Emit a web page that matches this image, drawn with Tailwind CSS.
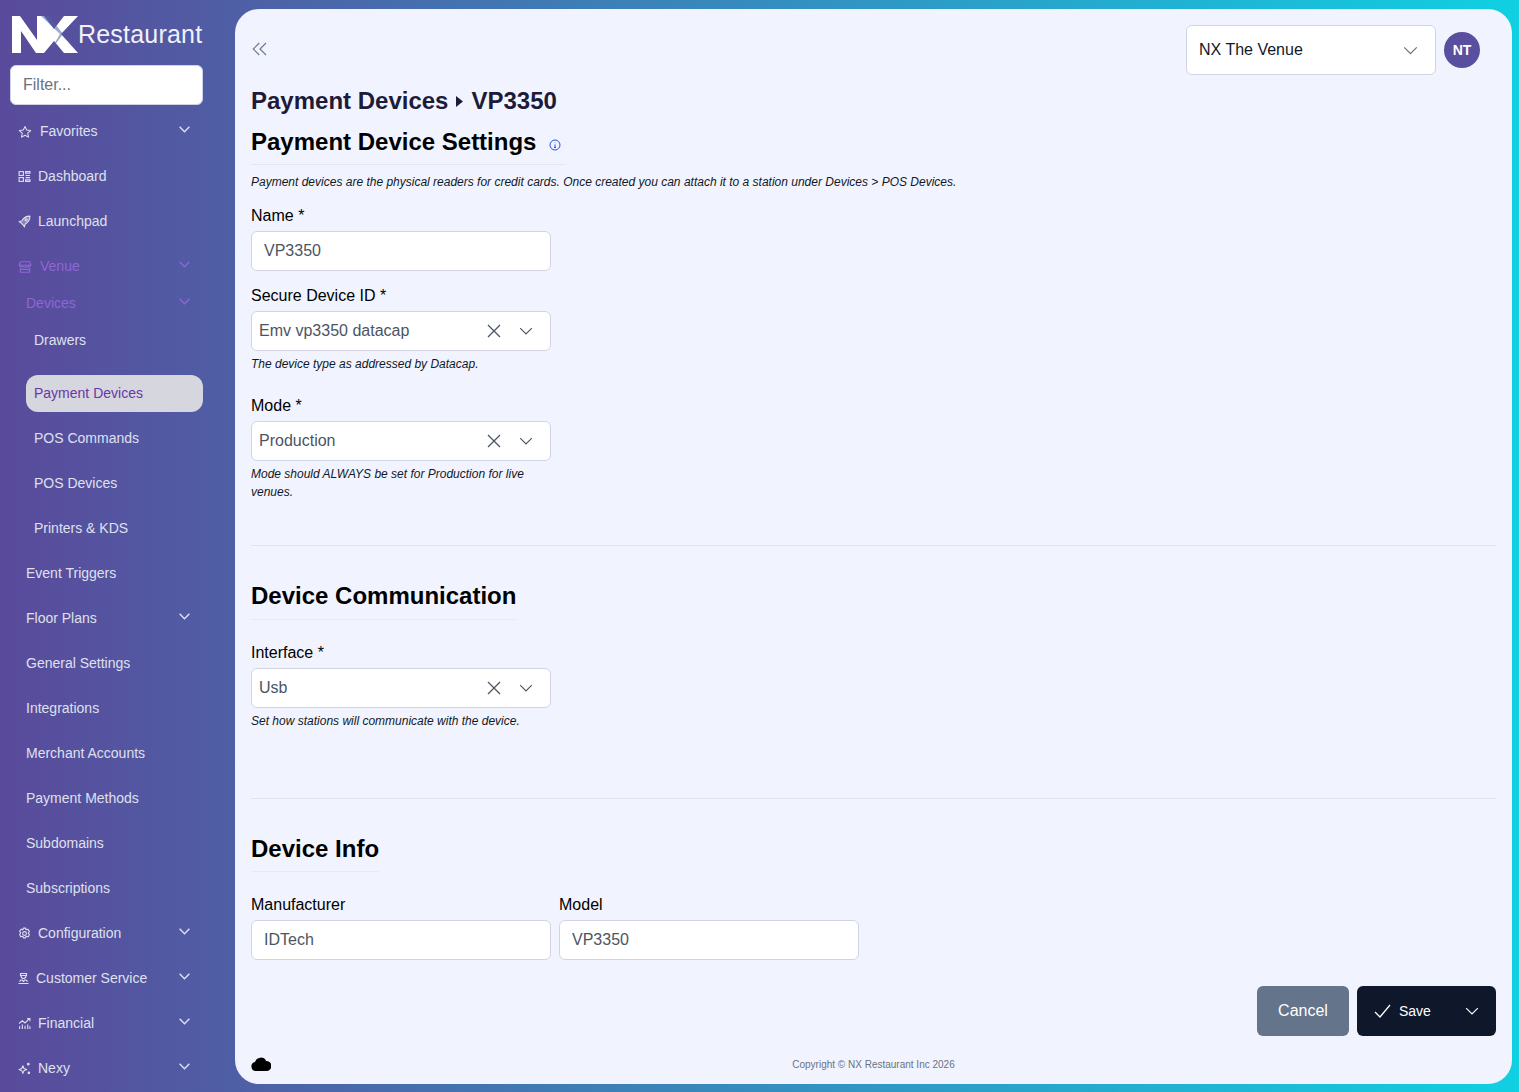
<!DOCTYPE html>
<html lang="en">

<head>
    <meta charset="UTF-8">
    <title>Payment Devices</title>
    <script src="https://cdn.jsdelivr.net/npm/@tailwindcss/browser@4"></script>
</head>

<body class="h-[1092px] overflow-hidden flex bg-linear-to-r/srgb from-[#5a4a9b] to-[#10d0e2] font-['Liberation_Sans',sans-serif]">
    <!-- sidebar -->
    <aside class="w-[235px] shrink-0 text-[14px] text-[#dfe0ee]">
        <div class="flex items-center h-[65px] pl-3 pt-[4px]">
            <svg class="w-[66px] h-[37px] shrink-0" viewBox="0 0 66 37" fill="#fff">
                <path d="M0 0h8l17 24V0h7l10 13L52 0h14L49 18l17 19H52L42 25 32 37h-8L9 15v22H0z"/>
                <path d="M29 0h8l14 18-14 19 11-19z" fill="#5164a8" opacity="0.55"/>
            </svg>
            <span class="ml-0 text-[25px] leading-none font-light tracking-[0.2px] text-[#f0f1f8]">Restaurant</span>
        </div>
        <div class="px-[10px]">
            <input placeholder="Filter..." class="w-[193px] h-[40px] px-3 bg-white rounded-md border border-[#cfd4e4] text-[16px] placeholder:text-[#6b7280]">
        </div>

        <nav class="mt-[4px]">
            <a class="h-[45px] flex items-center pl-[18px] pr-[44px]">
                <svg class="w-[14px] h-[14px] mr-2 shrink-0" viewBox="0 0 24 24" fill="none" stroke="currentColor" stroke-width="1.8" stroke-linejoin="round"><path d="M12 2.5l2.9 6.2 6.8.8-5 4.6 1.3 6.7-6-3.3-6 3.3 1.3-6.7-5-4.6 6.8-.8z"/></svg>
                <span class="flex-1">Favorites</span>
                <svg class="w-[13px] h-[13px] -mt-1 shrink-0" viewBox="0 0 24 24" fill="none" stroke="currentColor" stroke-width="2.6"><path d="M3 7l9 9 9-9"/></svg>
            </a>
            <a class="h-[45px] flex items-center pl-[18px]">
                <svg class="w-[13px] h-[13px] mr-[7px] shrink-0" viewBox="0 0 24 24" fill="none" stroke="currentColor" stroke-width="2"><rect x="2" y="3" width="8" height="7"/><rect x="2" y="14" width="8" height="7"/><path d="M14 3h8v3h-8zM14 10h8M14 14h8M14 18h8v3h-8z"/></svg>
                <span>Dashboard</span>
            </a>
            <a class="h-[45px] flex items-center pl-[18px]">
                <svg class="w-[13px] h-[13px] mr-[7px] shrink-0" viewBox="0 0 24 24" fill="none" stroke="currentColor" stroke-width="2" stroke-linejoin="round"><path d="M22 2c-7 0-12 3-15 9l-5 1 4 3 3 3 3 4 1-5c6-3 9-8 9-15z" fill="currentColor" fill-opacity="0.35"/><circle cx="15" cy="9" r="2"/></svg>
                <span>Launchpad</span>
            </a>
            <a class="h-[45px] flex items-center pl-[18px] pr-[44px] text-[#8e66d6]">
                <svg class="w-[14px] h-[14px] mr-2 shrink-0" viewBox="0 0 24 24" fill="none" stroke="currentColor" stroke-width="2" stroke-linejoin="round"><path d="M4 3h16l2 6H2zM4 13v8h16v-8M2 9c2 4 18 4 20 0M4 16h16"/></svg>
                <span class="flex-1">Venue</span>
                <svg class="w-[13px] h-[13px] -mt-1 shrink-0" viewBox="0 0 24 24" fill="none" stroke="currentColor" stroke-width="2.6"><path d="M3 7l9 9 9-9"/></svg>
            </a>
            <a class="h-[37px] -mt-[4px] flex items-center pl-[26px] pr-[44px] text-[#8e66d6]">
                <span class="flex-1">Devices</span>
                <svg class="w-[13px] h-[13px] -mt-1 shrink-0" viewBox="0 0 24 24" fill="none" stroke="currentColor" stroke-width="2.6"><path d="M3 7l9 9 9-9"/></svg>
            </a>
            <a class="h-[37px] flex items-center pl-[34px]">Drawers</a>
            <a class="h-[37px] w-[177px] mt-[16px] ml-[26px] flex items-center pl-2 rounded-xl bg-[#d6d6de] text-[#6a35a8]">Payment Devices</a>
            <a class="h-[45px] mt-[4px] flex items-center pl-[34px]">POS Commands</a>
            <a class="h-[45px] flex items-center pl-[34px]">POS Devices</a>
            <a class="h-[45px] flex items-center pl-[34px]">Printers &amp; KDS</a>
            <a class="h-[45px] flex items-center pl-[26px]">Event Triggers</a>
            <a class="h-[45px] flex items-center pl-[26px] pr-[44px]">
                <span class="flex-1">Floor Plans</span>
                <svg class="w-[13px] h-[13px] -mt-1 shrink-0" viewBox="0 0 24 24" fill="none" stroke="currentColor" stroke-width="2.6"><path d="M3 7l9 9 9-9"/></svg>
            </a>
            <a class="h-[45px] flex items-center pl-[26px]">General Settings</a>
            <a class="h-[45px] flex items-center pl-[26px]">Integrations</a>
            <a class="h-[45px] flex items-center pl-[26px]">Merchant Accounts</a>
            <a class="h-[45px] flex items-center pl-[26px]">Payment Methods</a>
            <a class="h-[45px] flex items-center pl-[26px]">Subdomains</a>
            <a class="h-[45px] flex items-center pl-[26px]">Subscriptions</a>
            <a class="h-[45px] flex items-center pl-[18px] pr-[44px]">
                <svg class="w-[13px] h-[13px] mr-[7px] shrink-0" viewBox="0 0 24 24" fill="none" stroke="currentColor" stroke-width="2"><path d="M10 2h4l1 3 3-1 3 4-2 3 2 3-2 4-4-1-1 3h-4l-1-3-4 1-2-4 2-3-2-3 3-4 3 1z" stroke-linejoin="round"/><circle cx="12" cy="12" r="3.5"/></svg>
                <span class="flex-1">Configuration</span>
                <svg class="w-[13px] h-[13px] -mt-1 shrink-0" viewBox="0 0 24 24" fill="none" stroke="currentColor" stroke-width="2.6"><path d="M3 7l9 9 9-9"/></svg>
            </a>
            <a class="h-[45px] flex items-center pl-[18px] pr-[44px]">
                <svg class="w-[11px] h-[13px] mr-[7px] shrink-0" viewBox="0 0 22 24" fill="none" stroke="currentColor" stroke-width="2.2"><path d="M5 2h12v4H5zM6 6c0 8 10 8 10 0M7 14l4 4 4-4M3 18l3-3M19 18l-3-3M1 22h20"/></svg>
                <span class="flex-1">Customer Service</span>
                <svg class="w-[13px] h-[13px] -mt-1 shrink-0" viewBox="0 0 24 24" fill="none" stroke="currentColor" stroke-width="2.6"><path d="M3 7l9 9 9-9"/></svg>
            </a>
            <a class="h-[45px] flex items-center pl-[18px] pr-[44px]">
                <svg class="w-[13px] h-[13px] mr-[7px] shrink-0" viewBox="0 0 24 24" fill="none" stroke="currentColor" stroke-width="2"><path d="M2 12l6-5 5 4 8-8M17 3h5v5M3 22v-5M8 22v-8M13 22v-6M18 22v-8M22 22v-5"/></svg>
                <span class="flex-1">Financial</span>
                <svg class="w-[13px] h-[13px] -mt-1 shrink-0" viewBox="0 0 24 24" fill="none" stroke="currentColor" stroke-width="2.6"><path d="M3 7l9 9 9-9"/></svg>
            </a>
            <a class="h-[45px] flex items-center pl-[18px] pr-[44px]">
                <svg class="w-[13px] h-[13px] mr-[7px] shrink-0" viewBox="0 0 24 24" fill="none" stroke="currentColor" stroke-width="2"><path d="M9 7l2 5 5 2-5 2-2 5-2-5-5-2 5-2z" stroke-linejoin="round"/><circle cx="19" cy="4" r="1.5" fill="currentColor"/><circle cx="20" cy="20" r="1.5" fill="currentColor"/></svg>
                <span class="flex-1">Nexy</span>
                <svg class="w-[13px] h-[13px] -mt-1 shrink-0" viewBox="0 0 24 24" fill="none" stroke="currentColor" stroke-width="2.6"><path d="M3 7l9 9 9-9"/></svg>
            </a>
        </nav>
    </aside>

    <!-- main panel -->
    <main class="w-[1277px] h-[1075px] mt-[9px] rounded-[24px] bg-[#f1f4ff] px-4 pt-4 text-black">
        <div class="flex items-center h-[50px]">
            <svg class="w-[18px] h-[18px] -mt-[2px] text-[#6b7a90]" viewBox="0 0 24 24" fill="none" stroke="currentColor" stroke-width="1.6"><path d="M11 4l-8 8 8 8M20 4l-8 8 8 8"/></svg>
            <div class="ml-auto w-[250px] h-[50px] flex items-center justify-between pl-3 pr-[17px] bg-white rounded-md border border-[#d1d5e3] text-[16px] text-[#111827]">
                <span>NX The Venue</span>
                <svg class="w-[15px] h-[15px] text-[#6b7280]" viewBox="0 0 24 24" fill="none" stroke="currentColor" stroke-width="2"><path d="M2 7l10 10L22 7"/></svg>
            </div>
            <div class="ml-2 mr-4 w-9 h-9 rounded-full bg-[#5a4e9e] flex items-center justify-center text-white text-[14px] font-bold">NT</div>
        </div>

        <h1 class="mt-[10px] flex items-center whitespace-nowrap text-[24px] leading-8 font-bold text-[#1e1b3a]">
            Payment Devices
            <svg class="w-[7px] h-[11px] mx-[8px]" viewBox="0 0 7 11" fill="currentColor"><path d="M0 0l7 5.5L0 11z"/></svg>
            VP3350
        </h1>
        <h2 class="mt-[9px] w-[314px] pb-[6px] border-b border-[#e4e7f0] flex items-center whitespace-nowrap text-[24px] leading-8 font-bold">
            Payment Device Settings
            <svg class="w-[12px] h-[12px] ml-[13px] mt-[5px] text-[#2b50e0]" viewBox="0 0 24 24" fill="none" stroke="currentColor" stroke-width="2"><circle cx="12" cy="12" r="10"/><path d="M12 11v6M10 17h4M12 7v1"/></svg>
        </h2>
        <p class="mt-[8px] text-[12px] leading-[18px] italic text-[#111827]">Payment devices are the physical readers for credit cards. Once created you can attach it to a station under Devices &gt; POS Devices.</p>

        <label class="block mt-[13px] text-[16px] leading-6">Name *</label>
        <input value="VP3350" class="block mt-[3px] w-[300px] h-[40px] px-3 bg-white rounded-md border border-[#d1d5e3] text-[16px] text-[#4b5563]">

        <label class="block mt-[13px] text-[16px] leading-6">Secure Device ID *</label>
        <div class="mt-[3px] w-[300px] h-[40px] flex items-center pl-[7px] pr-[17px] bg-white rounded-md border border-[#d1d5e3] text-[16px] text-[#4b5563]">
            <span class="flex-1">Emv vp3350 datacap</span>
            <svg class="w-[14px] h-[14px] mr-[18px]" viewBox="0 0 14 14" fill="none" stroke="currentColor" stroke-width="1.3"><path d="M1 1l12 12M13 1L1 13"/></svg>
            <svg class="w-[14px] h-[14px]" viewBox="0 0 24 24" fill="none" stroke="currentColor" stroke-width="2"><path d="M2 7l10 10L22 7"/></svg>
        </div>
        <p class="mt-[4px] text-[12px] leading-[18px] italic text-[#111827]">The device type as addressed by Datacap.</p>

        <label class="block mt-[21px] text-[16px] leading-6">Mode *</label>
        <div class="mt-[3px] w-[300px] h-[40px] flex items-center pl-[7px] pr-[17px] bg-white rounded-md border border-[#d1d5e3] text-[16px] text-[#4b5563]">
            <span class="flex-1">Production</span>
            <svg class="w-[14px] h-[14px] mr-[18px]" viewBox="0 0 14 14" fill="none" stroke="currentColor" stroke-width="1.3"><path d="M1 1l12 12M13 1L1 13"/></svg>
            <svg class="w-[14px] h-[14px]" viewBox="0 0 24 24" fill="none" stroke="currentColor" stroke-width="2"><path d="M2 7l10 10L22 7"/></svg>
        </div>
        <p class="mt-[4px] w-[300px] text-[12px] leading-[18px] italic text-[#111827]">Mode should ALWAYS be set for Production for live venues.</p>

        <hr class="mt-[44px] border-[#e2e5ee]">

        <h2 class="mt-[34px] w-fit pb-[7px] border-b border-[#e8ebf4] text-[24px] leading-8 font-bold">Device Communication</h2>
        <label class="block mt-[21px] text-[16px] leading-6">Interface *</label>
        <div class="mt-[3px] w-[300px] h-[40px] flex items-center pl-[7px] pr-[17px] bg-white rounded-md border border-[#d1d5e3] text-[16px] text-[#4b5563]">
            <span class="flex-1">Usb</span>
            <svg class="w-[14px] h-[14px] mr-[18px]" viewBox="0 0 14 14" fill="none" stroke="currentColor" stroke-width="1.3"><path d="M1 1l12 12M13 1L1 13"/></svg>
            <svg class="w-[14px] h-[14px]" viewBox="0 0 24 24" fill="none" stroke="currentColor" stroke-width="2"><path d="M2 7l10 10L22 7"/></svg>
        </div>
        <p class="mt-[4px] text-[12px] leading-[18px] italic text-[#111827]">Set how stations will communicate with the device.</p>

        <hr class="mt-[68px] border-[#e2e5ee]">

        <h2 class="mt-[34px] w-fit pb-[6px] border-b border-[#e8ebf4] text-[24px] leading-8 font-bold">Device Info</h2>
        <div class="mt-[21px] flex gap-2">
            <div>
                <label class="block text-[16px] leading-6">Manufacturer</label>
                <input value="IDTech" class="block mt-[3px] w-[300px] h-[40px] px-3 bg-white rounded-md border border-[#d1d5e3] text-[16px] text-[#4b5563]">
            </div>
            <div>
                <label class="block text-[16px] leading-6">Model</label>
                <input value="VP3350" class="block mt-[3px] w-[300px] h-[40px] px-3 bg-white rounded-md border border-[#d1d5e3] text-[16px] text-[#4b5563]">
            </div>
        </div>

        <div class="mt-[26px] flex justify-end gap-2">
            <button class="w-[92px] h-[50px] rounded-md bg-[#64748b] text-white text-[16px] font-medium">Cancel</button>
            <button class="w-[139px] h-[50px] flex items-center pl-[17px] pr-[17px] rounded-md bg-[#0f172a] text-white text-[14px] font-medium">
                <svg class="w-[17px] h-[14px] mr-2" viewBox="0 0 17 14" fill="none" stroke="currentColor" stroke-width="1.3"><path d="M1 8l5 5L16 1"/></svg>
                <span class="flex-1 text-left">Save</span>
                <svg class="w-[14px] h-[14px]" viewBox="0 0 24 24" fill="none" stroke="currentColor" stroke-width="2"><path d="M2 7l10 10L22 7"/></svg>
            </button>
        </div>

        <div class="mt-[18px] flex items-center h-[20px]">
            <svg class="w-[20px] h-[15px] -mt-[2px] shrink-0" viewBox="0 0 20 15" fill="#000"><path d="M5 15a4.5 4.5 0 0 1-1-8.9A6 6 0 0 1 15.2 5 5 5 0 0 1 15.5 15z"/></svg>
            <p class="flex-1 mr-[20px] text-center text-[10px] text-[#6b7280]">Copyright © NX Restaurant Inc 2026</p>
        </div>
    </main>
</body>

</html>
